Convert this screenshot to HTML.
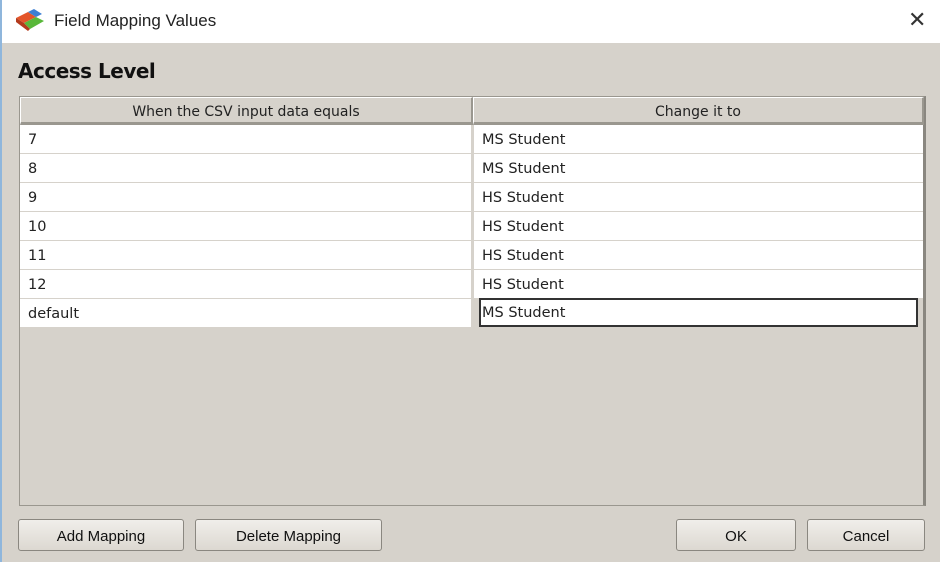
<!DOCTYPE html>
<html><head><style>
*{margin:0;padding:0;box-sizing:border-box}
body{width:940px;height:562px;position:relative;background:#d6d2cb;font-family:"DejaVu Sans","Liberation Sans",sans-serif;overflow:hidden}
.tb{position:absolute;left:0;top:0;width:940px;height:43px;background:#fff;border-left:2px solid #8fb6dc}
.title{position:absolute;left:52px;top:11px;font-size:17px;color:#222;font-family:"Liberation Sans",sans-serif}
.x{position:absolute;left:906px;top:8px;font-size:22px;color:#333;font-family:"DejaVu Sans",sans-serif;font-weight:200}
.lb{position:absolute;left:0;top:43px;width:2px;height:519px;background:#8fb6dc}
h1{position:absolute;left:18px;top:59px;font-size:20px;font-weight:bold;color:#111;font-family:"DejaVu Sans",sans-serif;letter-spacing:-.5px}
.tbl{position:absolute;left:19px;top:96px;width:907px;height:410px;border:1px solid #9a978f;border-right:3px solid #8a8780}
.hd{position:absolute;top:0;height:28px;background:#d6d2cb;border:1px solid #fff;border-bottom:3px solid #9a978f;border-right:2px solid #9a978f;font-size:14px;color:#222;text-align:center;line-height:28px}
.c{position:absolute;height:28px;background:#fff;font-size:14.5px;color:#222;line-height:30px;padding-left:8px}
.btn{position:absolute;top:519px;height:32px;border:1px solid #8a8780;border-radius:3px;background:linear-gradient(#f0eeea,#dcd8d1);font-size:15px;color:#111;text-align:center;line-height:33px;font-family:"Liberation Sans",sans-serif}
</style></head><body>
<div class="tb">
<svg style="position:absolute;left:12px;top:8px" width="32" height="26" viewBox="0 0 32 26">
<path d="M2 10 L14 4 L22 9 L10 15Z" fill="#e3552a"/>
<path d="M10 15 L22 9 L30 13 L16 21Z" fill="#59b83a"/>
<path d="M14 4 L20 1 L28 6 L22 9Z" fill="#3d7fd4"/>
<path d="M2 10 L10 15 L16 21 L14 23 L2 14Z" fill="#b33a1c"/>
</svg>
<div class="title">Field Mapping Values</div>
<div class="x">✕</div>
</div>
<div class="lb"></div>
<h1>Access Level</h1>
<div class="tbl">
<div class="hd" style="left:0;width:453px">When the CSV input data equals</div>
<div class="hd" style="left:453px;width:451px">Change it to</div>
</div>
<div id="rows"></div>
<script>
var a=["7","8","9","10","11","12","default"],b=["MS Student","MS Student","HS Student","HS Student","HS Student","HS Student","MS Student"],h="";
for(var i=0;i<7;i++){var y=125+i*29;
h+='<div class="c" style="left:20px;top:'+y+'px;width:451px">'+a[i]+'</div>';
if(i<6)h+='<div class="c" style="left:474px;top:'+y+'px;width:449px">'+b[i]+'</div>';}
h+='<div class="c" style="left:479px;top:298px;width:439px;height:29px;border:2px solid #333;padding-left:1px;line-height:27px">MS Student</div>';
document.getElementById("rows").innerHTML=h;
</script>
<div class="btn" style="left:18px;width:166px">Add Mapping</div>
<div class="btn" style="left:195px;width:187px">Delete Mapping</div>
<div class="btn" style="left:676px;width:120px">OK</div>
<div class="btn" style="left:807px;width:118px">Cancel</div>
</body></html>
